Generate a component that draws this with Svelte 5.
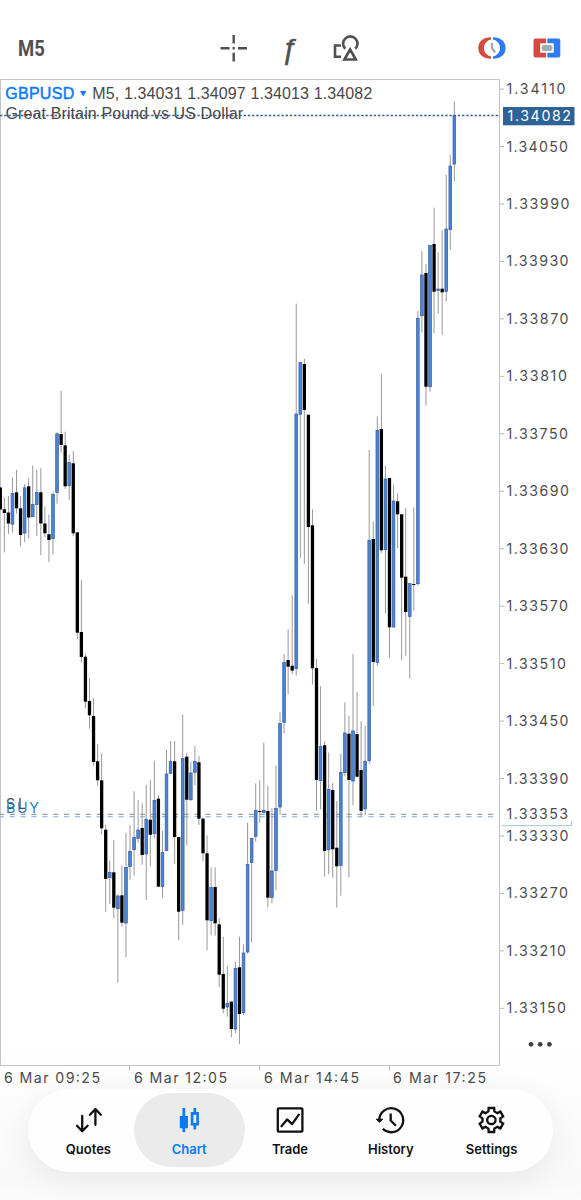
<script>
  const STEP = 4.054;
  // [high, body top, body bottom, low, rising]
  const candles = [
    [487.5, 487.5, 509.5, 509.5, 0], [497.5, 509.3, 513, 552.5, 0], [496, 512.5, 523.5, 534, 0], [477.5, 493.3, 524.5, 532.5, 1],
    [470, 492.3, 508.3, 513.5, 0], [496, 508.3, 535, 546.5, 0], [484, 487.5, 533.3, 542, 1], [478.5, 486.3, 517.5, 538.5, 0],
    [465.5, 504, 517, 517, 1], [470, 492.3, 504.7, 536, 1], [468, 492.3, 523.5, 555, 0], [506.5, 523.5, 533.3, 537, 0],
    [514.5, 534.3, 540, 562, 0], [491.5, 494, 539, 554.5, 1], [432.5, 433.5, 492.7, 503.7, 1], [390.7, 434, 445, 452.7, 0],
    [431.7, 445.3, 486.3, 489, 0], [454.7, 462.3, 486, 500, 1], [451, 463.3, 533.3, 536.3, 0], [532.3, 532.3, 632.7, 639.3, 0],
    [580, 632, 657, 662.7, 0], [654.3, 656.7, 701.7, 708.3, 0], [678, 701, 715.3, 728.7, 0], [698.3, 716, 762, 765.7, 0],
    [744, 761.3, 780.3, 785.7, 0], [753.3, 780.3, 828.3, 834.3, 0], [824.7, 829.7, 879, 911.7, 0], [860.7, 872.3, 878, 904, 1],
    [840, 872.3, 907.7, 918.3, 0], [894.3, 895.7, 909, 982.7, 1], [865.7, 895.3, 922.7, 926.7, 0], [832.7, 867.3, 923.3, 957.3, 1],
    [825, 851, 866.7, 879.3, 1], [791.3, 837, 850, 875.7, 1], [800, 829.7, 838.7, 842.7, 1], [803.3, 828, 855, 864.7, 0],
    [784.7, 819, 854.3, 900, 1], [780, 819.7, 834.7, 866, 0], [760.7, 800, 834, 838.3, 1], [795, 798.7, 886.7, 886.7, 0],
    [830.7, 852.3, 886.7, 897.7, 1], [749.7, 773.7, 851, 851, 1], [741, 761.3, 773.7, 773.7, 1], [741, 761.3, 837, 864, 0],
    [837, 837, 911.7, 940, 0], [714.5, 758.3, 910.7, 925, 1], [752.7, 756.7, 799.7, 845.7, 0], [761.7, 772.7, 800, 801, 1],
    [746, 761.3, 772.7, 785.3, 1], [756, 762.3, 818.7, 825, 0], [817.3, 818.7, 853.3, 861.3, 0], [835.3, 853.3, 920.3, 950.3, 0],
    [867.3, 887, 921, 935, 1], [867.3, 887, 923.3, 935.7, 0], [918.3, 924.3, 974.7, 987, 0], [936.7, 974, 1008.7, 1013.3, 0],
    [966.3, 1003, 1007.3, 1016.7, 1], [1001, 1001.7, 1029, 1037.3, 0], [961.7, 968, 1029.3, 1033, 1], [936.7, 967.3, 1014, 1044, 0],
    [944.3, 952.7, 1013, 1015, 1], [822.7, 864, 952.3, 953.7, 1], [838.3, 838.3, 862.7, 942.3, 1], [783.3, 810.3, 836.7, 841.7, 1],
    [780.3, 811, 812, 823, 0], [742.7, 810, 813, 813, 1], [785.7, 811, 897.7, 907.3, 0], [808, 870.7, 897.7, 903.3, 1],
    [765.3, 808.3, 870.7, 890, 1], [712.3, 723.3, 807.3, 814.7, 1], [654, 662, 722.7, 733.3, 1], [629.3, 660, 666.7, 694, 0],
    [595.3, 665.7, 670.7, 674, 0], [303.7, 413.7, 669, 675.7, 1], [362.3, 362.3, 414.7, 558.3, 1], [358.7, 364, 410, 564, 0],
    [414.7, 414.7, 527, 604, 0], [509.3, 525.3, 668.3, 684.7, 0], [659, 668, 780, 810.7, 0], [686.3, 746, 781, 809.3, 1],
    [741.3, 745.3, 851, 876.7, 0], [752.3, 789, 850, 874.3, 1], [783, 790, 849.3, 877.7, 0], [801, 847.7, 866.3, 907.7, 0],
    [753.7, 772, 865.7, 895.7, 1], [702.3, 732.7, 773, 776.3, 1], [715.7, 733.7, 780, 877.3, 0], [654, 730.7, 781.3, 805.3, 1],
    [691.7, 734, 776.7, 777.7, 0], [721.3, 770, 811, 816.7, 0], [725.7, 761, 809.3, 815, 1], [450, 540, 761, 763.7, 1],
    [521.3, 539, 662, 706, 0], [416.3, 430, 662.7, 666, 1], [374.3, 429, 550.3, 553, 0], [465.7, 478.7, 550, 613.3, 1],
    [478, 478, 627.3, 657.7, 0], [484.7, 500.7, 627.3, 627.3, 1], [493.3, 501.3, 514.3, 548.3, 0], [514.3, 514.3, 577.7, 660, 0],
    [508, 576.7, 612, 655.7, 0], [583.3, 583.3, 616.7, 678.7, 1], [507.3, 584, 585, 610.7, 0], [311, 318, 584, 585.7, 1],
    [251, 274.7, 316, 332.7, 1], [264, 273, 386.7, 405.7, 0], [245, 245, 387, 391.7, 1], [207.7, 244, 291.7, 333.3, 0],
    [252.3, 288.7, 290.7, 313.7, 1], [230.3, 288.7, 292.3, 335, 0], [175, 228.7, 291.7, 301.3, 1], [155, 165.7, 230, 249.7, 1],
    [101.3, 115.3, 164.3, 181.7, 1]
  ].map(([high, top, bottom, low, up], i) => ({ x: 0.3 + i * STEP, high, top, bottom, low, up }));

  const prices = [
    ['1.34110', 59], ['1.34050', 61.5], ['1.33990', 63], ['1.33930', 62], ['1.33870', 62], ['1.33810', 60.5],
    ['1.33750', 61.5], ['1.33690', 62.5], ['1.33630', 62], ['1.33570', 61.5], ['1.33510', 59.5], ['1.33450', 62],
    ['1.33390', 62], ['1.33330', 62], ['1.33270', 61.5], ['1.33210', 59.5], ['1.33150', 59.5]
  ].map(([label, width], i) => ({ label, width, y: 89.1 + i * 57.45 }));

  const times = [
    { label: '6 Mar 09:25', x: 4, width: 96 },
    { label: '6 Mar 12:05', x: 134, width: 93 },
    { label: '6 Mar 14:45', x: 264, width: 95 },
    { label: '6 Mar 17:25', x: 393, width: 93 }
  ];

  function gear(outer, root) {
    const pts = [];
    for (let k = 0; k < 6; k++) {
      for (const [r, d] of [[root, -19], [outer, -13], [outer, 13], [root, 19]]) {
        const a = ((k * 60 - 90 + d) * Math.PI) / 180;
        pts.push(`${(15 + r * Math.cos(a)).toFixed(2)} ${(15 + r * Math.sin(a)).toFixed(2)}`);
      }
    }
    return `M${pts.join('L')}Z`;
  }
  const gearPath = gear(12.3, 9.1);
  const tabs = ['Quotes', 'Chart', 'Trade', 'History', 'Settings'];
</script>

<main>
  <header>
    <span class="timeframe"><span>M5</span></span>
    <div class="tools">
      <svg width="28" height="28" viewBox="0 0 28 28" fill="none" stroke="#505050" stroke-width="2.4">
        <path d="M.5 14.3h9M18 14.3h9M13.7 1v8.6M13.7 18.8v8.6M12.6 14.3h2.2" />
      </svg>
      <span class="function">ƒ</span>
      <svg width="28" height="28" viewBox="0 0 28 28" fill="none" stroke="#505050" stroke-width="2.6">
        <path d="M9 11.5H3v11.3H9M13.3 14.8A7.2 7.2 0 1 1 23.3 14.8M18.1 15.5l5.7 10H12.4z" />
      </svg>
    </div>
    <div class="trade-tools">
      <svg width="28" height="24" viewBox="0 0 28 24">
        <path d="M13 1.2C5 1.2.3 5.6.3 12S5 22.8 13 22.8V20.4A8.5 8.5 0 0 1 13 3.6z" fill="#d54a40" />
        <path d="M14.9 1.2C23 1.2 27.6 5.6 27.6 12S23 22.8 14.9 22.8V20.4A8.5 8.5 0 0 0 14.9 3.6z" fill="#2d7cf2" />
        <path d="M14 7v5.2l3.2 4.2" fill="none" stroke="#9fb0b3" stroke-width="2.4" />
      </svg>
      <svg width="28" height="20" viewBox="0 0 28 20">
        <path d="M2.5.5H13v4.8H7.2v9.4H13v4.8H2.5a2 2 0 0 1-2-2v-15a2 2 0 0 1 2-2z" fill="#d54a40" />
        <path d="M14.3.5h11a2 2 0 0 1 2 2v15a2 2 0 0 1-2 2h-11v-4.8h6.5V5.3h-6.5z" fill="#2d7cf2" />
        <rect x="8.6" y="6.9" width="10.8" height="6.2" rx="2.4" fill="#9fb0b3" />
      </svg>
    </div>
  </header>

  <svg class="chart" width="581" height="1010" viewBox="0 79 581 1010">
    <path d="M.5 1065V79.5H499.5V1065.5H0" fill="none" stroke="#c4c4c8" />
    <path d="M129.5 1066v4.5M259.5 1066v4.5M389.5 1066v4.5" stroke="#bbb" />

    <g stroke-width="1.1" stroke-dasharray="5.2 5.67" stroke-dashoffset="1.2">
      <path d="M0 814.4H499" stroke="#96a5ac" />
      <path d="M0 816.8H499" stroke="#7fadd2" />
    </g>

    {#each candles as c}
      <path d="M{c.x} {c.high}V{c.low}" stroke="#999" stroke-width="1" />
      {#if c.up}
        <rect x={c.x - 1.35} y={c.top + 0.3} width="2.7" height={Math.max(c.bottom - c.top - 0.6, 0.8)} fill="#4a83d8" stroke="#355f9f" stroke-width=".7" />
      {:else}
        <rect x={c.x - 1.65} y={c.top} width="3.3" height={c.bottom - c.top} fill="#000" />
      {/if}
    {/each}

    <path d="M0 115.5H500" stroke="#34628f" stroke-width="1.3" stroke-dasharray="2.4 1.8" />

    <g class="helv">
      <text x="5.2" y="98.8" textLength="69" class="symbol">GBPUSD</text>
      <path d="M80 91h6.4l-3.2 5.4z" fill="#0a7aff" />
      <text x="92.3" y="98.8" textLength="280">M5, 1.34031 1.34097 1.34013 1.34082</text>
      <text x="5.5" y="118.8" textLength="237.5">Great Britain Pound vs US Dollar</text>
    </g>

    <g class="axis">
      {#each prices as p}
        <path d="M500 {p.y}h4" stroke="#bbb" />
        <text x="506.5" y={p.y + 5} textLength={p.width}>{p.label}</text>
      {/each}
      <path d="M502 825.6H571.5V821" fill="none" stroke="#a3cbd3" />
      <text x="506.5" y="819.2" textLength="61.5">1.33353</text>
      <rect x="503" y="107" width="71.5" height="18.3" fill="#2e6398" />
      <text x="507.5" y="120.8" textLength="63.5" class="current">1.34082</text>
      {#each times as t}
        <text x={t.x} y="1082.6" textLength={t.width}>{t.label}</text>
      {/each}
      <text x="6" y="809" textLength="20">SL</text>
      <text x="6" y="812.6" textLength="33" class="buy">BUY</text>
    </g>

    <g fill="#404040">
      <circle cx="531" cy="1044.3" r="2.4" />
      <circle cx="540.2" cy="1044.3" r="2.4" />
      <circle cx="549.4" cy="1044.3" r="2.4" />
    </g>
  </svg>

  <nav>
    {#each tabs as tab}
      <div class="tab" class:active={tab === 'Chart'}>
        <svg width="30" height="30" viewBox="0 0 30 30" fill="none" stroke="currentColor" stroke-width="2.3" stroke-linecap="round" stroke-linejoin="round">
          {#if tab === 'Quotes'}
            <path d="M9.2 11v14.8M4 20.8l5.2 5.4 5.4-5.4M22.4 19.8V4.4M17 9.8l5.4-5.8 5.4 5.8" />
          {:else if tab === 'Chart'}
            <g stroke="none" fill="currentColor">
              <path d="M5.8 11h2.7V3h2.7v8h2.7v12.3h-2.7V27H8.5v-3.7H5.8z" />
              <path fill-rule="evenodd" d="M16.8 7h2.7V3h2.7v4h2.7v13.6h-2.7v4h-2.7v-4h-2.7zM19.4 9.7v8.2h2.9V9.7z" />
            </g>
          {:else if tab === 'Trade'}
            <rect x="2.8" y="3.3" width="24.6" height="23.4" rx="1" />
            <path d="M6.5 21.2l5.6-6.8 5 4.7 6.7-9.5" />
          {:else if tab === 'History'}
            <path d="M3.2 15A12 12 0 1 1 6.8 23.8" stroke-linecap="butt" />
            <path d="M.6 14.2h6.2L3.7 17.2z" fill="currentColor" stroke-width="1" />
            <path d="M14.7 8.5v7l5.2 5.2" stroke-linecap="butt" />
          {:else}
            <path d={gearPath} stroke-linejoin="miter" transform="translate(-.6)" />
            <circle cx="14.4" cy="15" r="4.2" />
          {/if}
        </svg>
        <span>{tab}</span>
      </div>
    {/each}
  </nav>
</main>

<style>
  :global(body) { background: #fff; }
  main {
    width: 581px;
    height: 1200px;
    overflow: hidden;
    display: flex;
    flex-direction: column;
    background: linear-gradient(#fff 1040px, #fcfcfc 1110px, #f9f9f9 1180px, #fcfcfc 1200px);
    color: #4a4a4a;
  }
  header {
    height: 79px;
    box-sizing: border-box;
    padding: 18px 20px 0 18px;
    display: flex;
    align-items: center;
    flex: none;
  }
  .timeframe {
    width: 202px;
    font: 700 22px Roboto, sans-serif;
    color: #505050;
  }
  .timeframe span {
    display: inline-block;
    transform: scaleX(.84);
    transform-origin: left;
  }
  .tools {
    display: flex;
    align-items: center;
    flex: 1;
  }
  .tools svg { margin-top: -1px; }
  .function {
    width: 84px;
    text-align: center;
    font: italic 29px/30px "Liberation Sans", sans-serif;
    color: #505050;
    -webkit-text-stroke: .5px #505050;
    text-indent: -2px;
  }
  .trade-tools {
    display: flex;
    align-items: center;
    gap: 27px;
    margin-top: -1px;
  }
  header svg, .chart { display: block; flex: none; }
  .helv {
    font: 16px "Liberation Sans", sans-serif;
    fill: #484848;
  }
  .symbol { fill: #0a7aff; stroke: #0a7aff; stroke-width: .45px; }
  .axis {
    font: 14.2px Inter, sans-serif;
    fill: #4c4c4c;
  }
  .current { fill: #fff; }
  .buy { fill: #2c7fc9; }
  nav {
    margin: 0 28px;
    height: 82.5px;
    box-sizing: border-box;
    padding: 4px 11px 5px 10px;
    flex: none;
    display: grid;
    grid-template-columns: repeat(5, 1fr);
    border-radius: 42px;
    background: #fefefe;
    box-shadow: 0 8px 34px rgba(0, 0, 0, .075);
  }
  .tab {
    margin: 0 -5px;
    padding-top: 12px;
    display: flex;
    flex-direction: column;
    align-items: center;
    border-radius: 37px;
    color: #111;
    font: 600 13px/17px Inter, sans-serif;
  }
  .tab span { margin-top: 6px; }
  .active { background: #ebebeb; color: #087bf0; }
</style>
